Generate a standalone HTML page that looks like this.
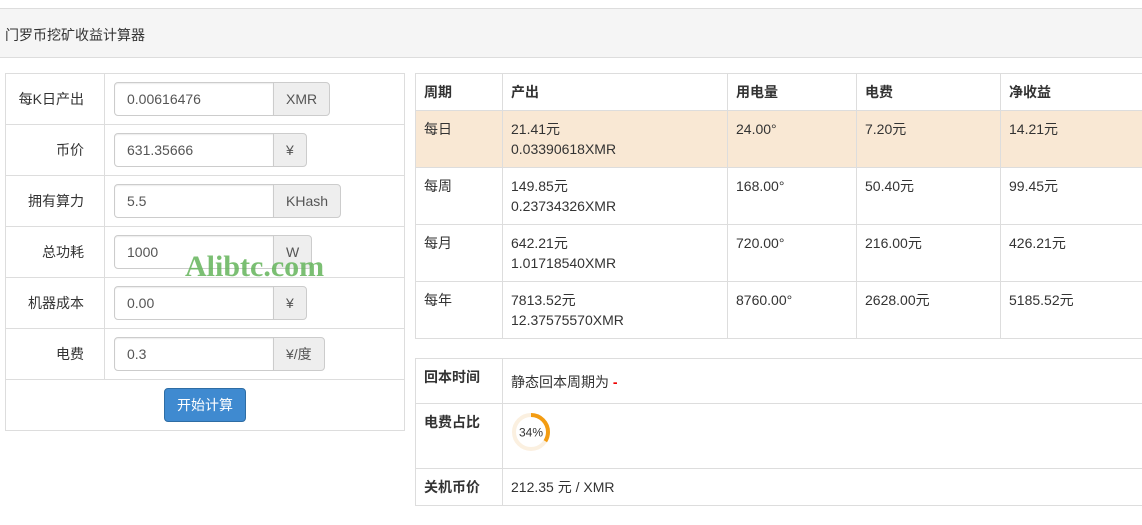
<!DOCTYPE html>
<html><head><meta charset="utf-8"><style>
*{box-sizing:border-box;margin:0;padding:0}
body{width:1142px;height:525px;background:#fff;font-family:"Liberation Sans","Noto Sans CJK SC",sans-serif;font-size:14px;color:#333;position:relative;overflow:hidden}
.a{position:absolute}
.hdr{left:0;top:8px;width:1142px;height:50px;background:#f5f5f5;border-top:1px solid #ddd;border-bottom:1px solid #ddd}
.hdr span{position:absolute;left:5px;top:16px;font-size:14px}
.lt{left:5px;top:73px;width:400px;height:358px;border:1px solid #ddd}
.row{position:absolute;left:0;width:398px;height:51px;border-bottom:1px solid #ddd}
.lab{position:absolute;left:0;top:0;width:99px;height:50px;border-right:1px solid #ddd;text-align:right;padding-right:20px;line-height:50px}
.inp{position:absolute;left:108px;top:8px;height:34px;width:160px;border:1px solid #ccc;border-radius:4px 0 0 4px;padding-left:12px;line-height:32px;color:#555;box-shadow:inset 0 1px 1px rgba(0,0,0,.075)}
.add{position:absolute;left:267px;top:8px;height:34px;border:1px solid #ccc;border-radius:0 4px 4px 0;background:#eee;color:#555;line-height:32px;padding:0 12px}
.btn{left:164px;top:388px;width:82px;height:34px;background:#3f8ad0;border:1px solid #2e6da4;border-radius:4px;color:#fff;text-align:center;line-height:32px}
.wm{left:185px;top:250px;font-family:"Liberation Serif",serif;font-weight:bold;font-size:30px;color:rgba(100,180,90,.85)}
table{position:absolute;border-collapse:collapse;font-size:14px}
td,th{border:1px solid #ddd;text-align:left;vertical-align:top;padding:8px;line-height:20px}
th{font-weight:bold}
.t1{left:415px;top:73px;width:740px}
.t1 tr{height:57px}
.t1 tr.h{height:37px}
.w td{background:#f9e8d4}
.t2{left:415px;top:358px;width:740px}
</style></head><body>
<div class="a hdr"><span>门罗币挖矿收益计算器</span></div>
<div class="a lt">
<div class="row" style="top:0"><div class="lab">每K日产出</div><div class="inp">0.00616476</div><div class="add">XMR</div></div>
<div class="row" style="top:51px"><div class="lab">币价</div><div class="inp">631.35666</div><div class="add">¥</div></div>
<div class="row" style="top:102px"><div class="lab">拥有算力</div><div class="inp">5.5</div><div class="add">KHash</div></div>
<div class="row" style="top:153px"><div class="lab">总功耗</div><div class="inp">1000</div><div class="add">W</div></div>
<div class="row" style="top:204px"><div class="lab">机器成本</div><div class="inp">0.00</div><div class="add">¥</div></div>
<div class="row" style="top:255px"><div class="lab">电费</div><div class="inp">0.3</div><div class="add">¥/度</div></div>
</div>
<div class="a btn">开始计算</div>
<div class="a wm">Alibtc.com</div>
<table class="t1">
<colgroup><col style="width:87px"><col style="width:225px"><col style="width:129px"><col style="width:144px"><col></colgroup>
<tr class="h"><th>周期</th><th>产出</th><th>用电量</th><th>电费</th><th>净收益</th></tr>
<tr class="w"><td>每日</td><td>21.41元<br>0.03390618XMR</td><td>24.00°</td><td>7.20元</td><td>14.21元</td></tr>
<tr><td>每周</td><td>149.85元<br>0.23734326XMR</td><td>168.00°</td><td>50.40元</td><td>99.45元</td></tr>
<tr><td>每月</td><td>642.21元<br>1.01718540XMR</td><td>720.00°</td><td>216.00元</td><td>426.21元</td></tr>
<tr><td>每年</td><td>7813.52元<br>12.37575570XMR</td><td>8760.00°</td><td>2628.00元</td><td>5185.52元</td></tr>
</table>
<table class="t2">
<colgroup><col style="width:87px"><col></colgroup>
<tr style="height:45px"><th>回本时间</th><td style="padding-top:13px">静态回本周期为 <b style="color:#e00">-</b></td></tr>
<tr style="height:65px"><th>电费占比</th><td style="padding:6px 6px"><svg width="44" height="44" viewBox="0 0 44 44"><circle cx="22" cy="22" r="17" fill="none" stroke="#fbf0e0" stroke-width="4"/><circle cx="22" cy="22" r="17" fill="none" stroke="#f39c12" stroke-width="4" stroke-dasharray="36.3 200" transform="rotate(-90 22 22)"/><text x="22" y="26.5" text-anchor="middle" font-size="12" fill="#333" font-family="Liberation Sans,sans-serif">34%</text></svg></td></tr>
<tr style="height:37px"><th>关机币价</th><td>212.35 元 / XMR</td></tr>
</table>
</body></html>
